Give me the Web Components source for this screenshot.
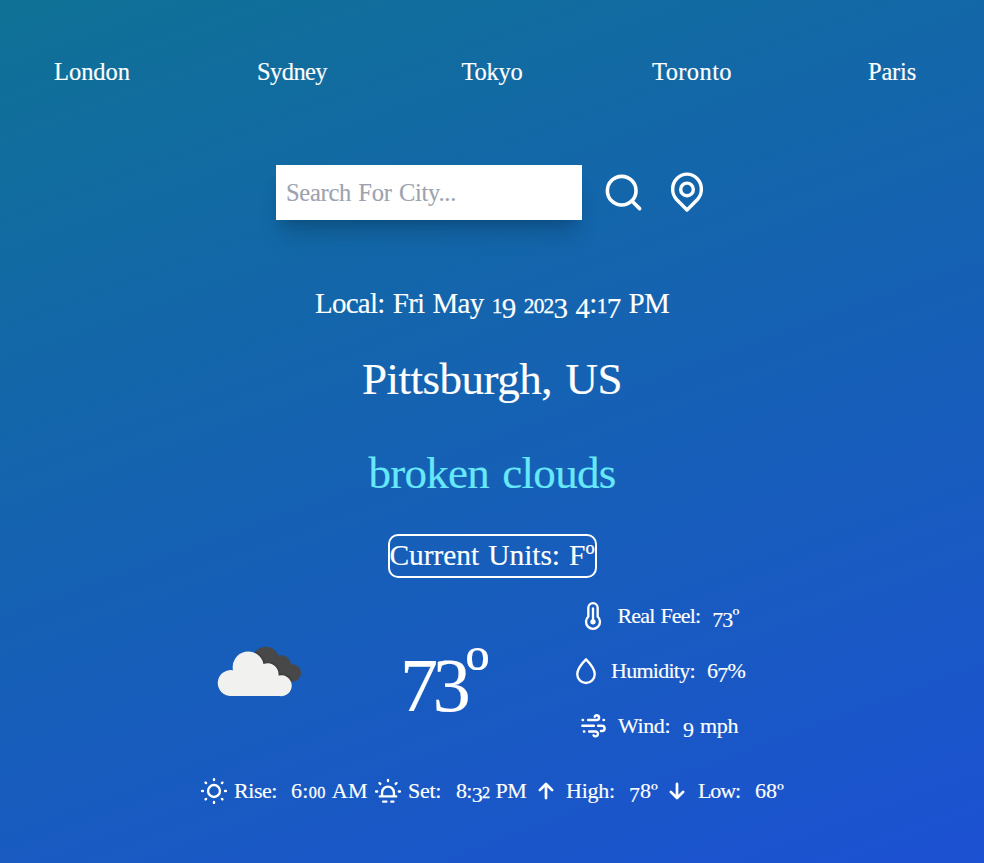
<!DOCTYPE html>
<html lang="en">
<head>
<meta charset="utf-8">
<title>Weather</title>
<style>
html, body { margin: 0; height: 100%; }
body { font-family: "Liberation Serif", serif; color: #fff; overflow: hidden; }
</style>
</head>
<body>
<weather-app></weather-app>
<script>
/* Text set to a given measure, with old-style figures:
   0 1 2 stand at x-height, 3 4 5 7 9 hang below the baseline. */
class FitText extends HTMLElement {
  connectedCallback() {
    const root = this.attachShadow({ mode: "open" });
    root.innerHTML = `<style>:host{display:inline-block;white-space:pre}
    .t{display:inline-block;white-space:pre;font-size:var(--s);line-height:1;height:1em;word-spacing:.06em;-webkit-text-stroke:.15px currentColor}
    .low{vertical-align:-.17em;line-height:0}
    .small{font-size:.74em;line-height:0;-webkit-text-stroke:.3px currentColor}</style><span class="t"></span>`;
    const span = root.querySelector(".t");
    const text = this.getAttribute("text");
    const target = Number(this.getAttribute("measure"));
    this.style.setProperty("--s", this.getAttribute("size") + "px");
    span.innerHTML = text.replace(/[34579]+|[012]+/g, d => `<span class="${/[012]/.test(d) ? "small" : "low"}">${d}</span>`);
    const natural = span.getBoundingClientRect().width;
    span.style.letterSpacing = ((target - natural) / text.length).toFixed(3) + "px";
    this.style.width = target + "px";
  }
}
customElements.define("fit-text", FitText);

const ICONS = {
  search: `<circle cx="11" cy="11" r="8"/><path d="M21 21l-4.3-4.3"/>`,
  pin: `<path d="M5.900 16.600L12 22.700l6.100-6.100A8.400 8.800 0 1 0 5.900 16.600z" transform="translate(.3 -.5)"/><circle cx="12.300" cy="10.200" r="3.700"/>`,
  thermo: `<path d="M8 12.500V5a4 4 0 0 1 8 0v7.500a6 6 0 1 1-8 0z"/><path d="M12 5.500v11"/><circle cx="12" cy="17" r="1.300" fill="currentColor"/>`,
  drop: `<path d="M12 2C9 5 4.500 9.600 4.500 14.700a7.500 7.600 0 0 0 15 0C19.500 9.600 15 5 12 2z"/>`,
  wind: `<g transform="translate(1.500 1) scale(.9)" stroke-width="2.300"><path d="M7 6.500h8.300a2.200 2.200 0 1 0-2-3.200M1.500 12h11M16.500 12h3.700a2.400 2.400 0 1 1 0 5h-1M8 17.500h6a2.300 2.300 0 1 1-1.800 3.600M1.800 6.500h.4M21.700 6.500h.4M3 17.500h.4"/></g>`,
  sun: `<circle cx="12" cy="12" r="5.500"/><path d="M12 1v.8M12 22.200v.8M1 12h.8M22.200 12h.8M4.200 4.200l.5.5M19.300 19.300l.5.5M4.200 19.800l.5-.5M19.300 4.700l.5-.5"/>`,
  set: `<path d="M4.500 17h15M6.500 16.500v-3a5.500 5.500 0 0 1 11 0v3M12 1.800v1M1 12.500h1M22 12.500h1M4.200 4.800l.7.7M19.800 4.800l-.7.7M7.500 21.800h3M15 21.800h2"/>`,
  up: `<path d="M12 18.500V6M6.300 11.200L12 5.500l5.700 5.700"/>`,
  down: `<path d="M12 5.500V18M6.300 12.800l5.700 5.700 5.700-5.700"/>`
};
class LineIcon extends HTMLElement {
  connectedCallback() {
    const n = this.getAttribute("size"), w = this.getAttribute("stroke") || 2;
    this.attachShadow({ mode: "open" }).innerHTML = `<style>:host{display:block;flex:none;width:${n}px;height:${n}px}svg{display:block;overflow:visible}</style>
    <svg width="${n}" height="${n}" viewBox="0 0 24 24" fill="none" stroke="currentColor" stroke-width="${w}" stroke-linecap="round" stroke-linejoin="round">${ICONS[this.getAttribute("name")]}</svg>`;
  }
}
customElements.define("line-icon", LineIcon);

class CloudPicture extends HTMLElement {
  connectedCallback() {
    this.attachShadow({ mode: "open" }).innerHTML = `<style>:host{display:block}svg{display:block;overflow:visible}</style>
    <svg width="84" height="53" viewBox="0 0 84 53">
      <defs><filter id="b" x="-20%" y="-20%" width="140%" height="140%"><feGaussianBlur stdDeviation="1.300"/></filter>
      <clipPath id="c"><path d="M35 12A13.500 13.500 0 0 1 60.500 11.500A10 10 0 0 1 73 20.500A8.600 8.600 0 1 1 73.500 37.500H45z"/></clipPath></defs>
      <path d="M35 12A13.500 13.500 0 0 1 60.500 11.500A10 10 0 0 1 73 20.500A8.600 8.600 0 1 1 73.500 37.500H45z" fill="#484849"/>
      <g clip-path="url(#c)"><path filter="url(#b)" fill="#222" d="M13 52A13 13 0 1 1 15 26.200A15.400 15.400 0 0 1 45.500 20A11 11 0 0 1 60.500 31.500A10.500 10.500 0 1 1 61.500 52z"/></g>
      <path fill="#f1f1f0" d="M13 52A13 13 0 1 1 15 26.200A15.400 15.400 0 0 1 45.500 20A11 11 0 0 1 60.500 31.500A10.500 10.500 0 1 1 61.500 52z"/>
    </svg>`;
  }
}
customElements.define("cloud-picture", CloudPicture);

class MetricRow extends HTMLElement {
  connectedCallback() {
    this.attachShadow({ mode: "open" }).innerHTML = `<style>:host{display:flex;align-items:center}</style><slot></slot>`;
  }
}
customElements.define("metric-row", MetricRow);

class WeatherApp extends HTMLElement {
  connectedCallback() {
    this.attachShadow({ mode: "open" }).innerHTML = `<style>
    :host{display:flex;flex-direction:column;align-items:center;box-sizing:border-box;width:984px;height:863px;background:linear-gradient(160deg,#0e7490 -9%,#1d4ed8 109%);line-height:1}
    nav{display:grid;grid-template-columns:repeat(5,200px);justify-items:center;padding-top:60px;width:1000px;height:165px;box-sizing:border-box}
    .search{display:flex;align-items:center;height:55px;width:432px}
    .box{box-sizing:border-box;width:306px;height:55px;background:#fff;color:#9ca3af;padding:16px 10px;box-shadow:0 20px 25px -5px #0000001a,0 8px 10px -6px #0000001a,0 14px 22px -7px #00000018;margin-right:20px}
    line-icon.pin{margin-left:21px}
    .local{margin-top:69px;height:32px}
    .city{margin-top:36px;height:48px}
    .desc{margin-top:46px;height:48px;color:#67e8f9}
    .units{box-sizing:border-box;width:209px;height:44px;border:2px solid #fff;border-radius:10px;margin-top:35px;padding-top:5px}
    .main{display:grid;grid-template-columns:200px 184px 200px;align-items:center;width:584px;height:164px;margin-top:10px}
    cloud-picture{margin:-1px 0 0 18px}
    .temp{display:flex;align-items:flex-start;height:84px;padding-top:5px;box-sizing:border-box}
    .list{display:grid;grid-template-rows:repeat(3,55px);justify-items:center;margin-left:-12px;width:168px}
    .list metric-row{gap:11px}
    .foot{display:flex;align-items:center;width:582px;margin:25px 0 0 0;height:28px}
    </style>
    <nav><fit-text text="London" size="24.500" measure="76"></fit-text><fit-text text="Sydney" size="24.500" measure="70"></fit-text><fit-text text="Tokyo" size="24.500" measure="61"></fit-text><fit-text text="Toronto" size="24.500" measure="80"></fit-text><fit-text text="Paris" size="24.500" measure="48"></fit-text></nav>
    <div class="search"><div class="box"><fit-text text="Search For City..." size="24.500" measure="170"></fit-text></div><line-icon name="search" size="43"></line-icon><line-icon class="pin" name="pin" size="41"></line-icon></div>
    <div class="local"><fit-text text="Local: Fri May 19 2023 4:17 PM" size="29" measure="354"></fit-text></div>
    <div class="city"><fit-text text="Pittsburgh, US" size="45" measure="260"></fit-text></div>
    <div class="desc"><fit-text text="broken clouds" size="45" measure="247"></fit-text></div>
    <div class="units"><fit-text text="Current Units: Fº" size="29.500" measure="205"></fit-text></div>
    <div class="main"><cloud-picture></cloud-picture>
      <div class="temp"><fit-text text="73º" size="76" measure="84"></fit-text></div>
      <div class="list">
        <metric-row><line-icon name="thermo" size="28"></line-icon><fit-text text="Real Feel:  73º" size="22" measure="121"></fit-text></metric-row>
        <metric-row><line-icon name="drop" size="28"></line-icon><fit-text text="Humidity:  67%" size="22" measure="134"></fit-text></metric-row>
        <metric-row><line-icon name="wind" size="28"></line-icon><fit-text text="Wind:  9 mph" size="22" measure="120"></fit-text></metric-row>
      </div></div>
    <div class="foot">
      <line-icon name="sun" size="26" stroke="2.200"></line-icon><fit-text style="margin-left:7px" text="Rise:" size="22" measure="43"></fit-text><fit-text style="margin-left:14px" text="6:00 AM" size="22" measure="77"></fit-text>
      <line-icon style="margin-left:7px" name="set" size="26" stroke="2.200"></line-icon><fit-text style="margin-left:7px" text="Set:" size="22" measure="33"></fit-text><fit-text style="margin-left:15px" text="8:32 PM" size="22" measure="70"></fit-text>
      <line-icon style="margin-left:7px" name="up" size="26" stroke="2.500"></line-icon><fit-text style="margin-left:7px" text="High:" size="22" measure="49"></fit-text><fit-text style="margin-left:14px" text="78º" size="22" measure="29"></fit-text>
      <line-icon style="margin-left:6px" name="down" size="26" stroke="2.500"></line-icon><fit-text style="margin-left:8px" text="Low:" size="22" measure="42"></fit-text><fit-text style="margin-left:15px" text="68º" size="22" measure="29"></fit-text>
    </div>`;
  }
}
customElements.define("weather-app", WeatherApp);
</script>
</body>
</html>
